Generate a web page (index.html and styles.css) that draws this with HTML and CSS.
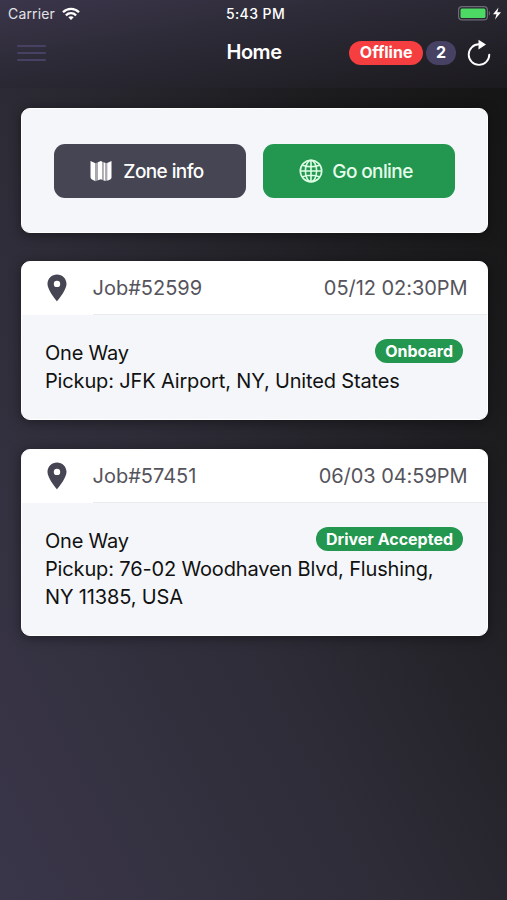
FILE: index.html
```
<!DOCTYPE html>
<html lang="en">
<head>
    <meta charset="UTF-8">
    <title>Home</title>
    <meta name="viewport" content="width=device-width, initial-scale=1">
    <link rel="stylesheet" href="styles.css">
</head>
<body>
    <header>
        <div class="status-bar">
            <div class="carrier">
                <span>Carrier</span>
                <svg width="18" height="14" viewBox="0 0 18 14" fill="none" stroke="#fff" stroke-width="2.3">
                    <path d="M1 5.2C5.5.7 12.5.7 17 5.2"/>
                    <path d="M3.9 8.3c2.9-2.8 7.3-2.8 10.2 0"/>
                    <path d="M9 13L6.3 10.3c1.5-1.4 3.9-1.4 5.4 0z" fill="#fff" stroke="none"/>
                </svg>
            </div>
            <span class="time">5:43 PM</span>
            <div class="battery">
                <svg width="44" height="15" viewBox="0 0 44 15">
                    <rect x=".6" y=".6" width="28.8" height="13.3" rx="3.5" fill="none" stroke="#6c6b74" stroke-width="1.2"/>
                    <rect x="2.5" y="2.5" width="25" height="9.5" rx="1.5" fill="#4cd964"/>
                    <path d="M30.8 5c1.6.6 1.6 4 0 4.6z" fill="#6c6b74"/>
                    <path d="M40.5 1.5L35 8.2h3.5l-1.5 5.3 6-7.2h-3.7z" fill="#fff"/>
                </svg>
            </div>
        </div>
        <div class="nav-bar">
            <button class="menu-btn" aria-label="Menu">
                <span></span>
                <span></span>
                <span></span>
            </button>
            <h1>Home</h1>
            <div class="nav-right">
                <span class="badge offline">Offline</span>
                <span class="badge count">2</span>
                <button class="refresh-btn" aria-label="Refresh">
                    <svg width="24" height="28" viewBox="0 0 24 28">
                        <path d="M12 5.3A10.3 10.3 0 1 0 22.3 15.6" fill="none" stroke="#fff" stroke-width="1.9" stroke-linecap="round"/>
                        <path d="M11.5.8L19 5.6l-7.5 4.9z" fill="#fff"/>
                    </svg>
                </button>
            </div>
        </div>
    </header>
    <main>
        <section class="card actions">
            <button class="btn btn-dark">
                <svg width="22" height="22" viewBox="0 0 22 22">
                    <path d="M.5 1l5 2.2v18L2 19.5Q.5 18.8.5 17z" fill="#fff"/>
                    <path d="M5.5 3.2L8 2.2v18l-2.5 1z" fill="#aaa9b1"/>
                    <path d="M8 2.2L10.8 1l1.2.5v18.3l-1.2-.5-2.8 1z" fill="#fff"/>
                    <path d="M12 1.5l1.6.7v18.3l-1.6-.7z" fill="#aaa9b1"/>
                    <path d="M13.6 2.2l2 .9v18l-2-.6z" fill="#fff"/>
                    <path d="M15.6 3.1h1.6v17.5l-1.6.5z" fill="#aaa9b1"/>
                    <path d="M17.2 2.9L21.5 1v16.5q0 1.3-1.3 1.9l-3 1.3z" fill="#fff"/>
                </svg>
                <span>Zone info</span>
            </button>
            <button class="btn btn-green">
                <svg width="24" height="24" viewBox="0 0 24 24" fill="none" stroke="#dcffe6" stroke-width="1.6">
                    <circle cx="12" cy="12" r="10.7"/>
                    <ellipse cx="12" cy="12" rx="5.6" ry="10.7"/>
                    <path d="M12 1.3v21.4M1.3 12h21.4M3.5 6.2q8.5 3 17 0M3.5 17.8q8.5-3 17 0"/>
                </svg>
                <span>Go online</span>
            </button>
        </section>

        <section class="card job">
            <div class="job-header">
                <svg class="pin" width="20" height="28" viewBox="0 0 20 28">
                    <path d="M10 .5C4.7.5.5 4.6.5 9.8.5 16.5 10 27.3 10 27.3s9.5-10.8 9.5-17.5C19.5 4.6 15.3.5 10 .5zm0 6.2a3.2 3.2 0 1 1 0 6.4 3.2 3.2 0 0 1 0-6.4z" fill="#464553" fill-rule="evenodd"/>
                </svg>
                <div class="job-title">
                    <span class="job-id">Job#52599</span>
                    <span class="job-date">05/12 02:30PM</span>
                </div>
            </div>
            <div class="job-body">
                <div class="job-row">
                    <span class="job-type">One Way</span>
                    <span class="badge status">Onboard</span>
                </div>
                <p class="pickup">Pickup: JFK Airport, NY, United States</p>
            </div>
        </section>

        <section class="card job">
            <div class="job-header">
                <svg class="pin" width="20" height="28" viewBox="0 0 20 28">
                    <path d="M10 .5C4.7.5.5 4.6.5 9.8.5 16.5 10 27.3 10 27.3s9.5-10.8 9.5-17.5C19.5 4.6 15.3.5 10 .5zm0 6.2a3.2 3.2 0 1 1 0 6.4 3.2 3.2 0 0 1 0-6.4z" fill="#464553" fill-rule="evenodd"/>
                </svg>
                <div class="job-title">
                    <span class="job-id">Job#57451</span>
                    <span class="job-date">06/03 04:59PM</span>
                </div>
            </div>
            <div class="job-body">
                <div class="job-row">
                    <span class="job-type">One Way</span>
                    <span class="badge status">Driver Accepted</span>
                </div>
                <p class="pickup">Pickup: 76-02 Woodhaven Blvd, Flushing,<br>NY 11385, USA</p>
            </div>
        </section>
    </main>
</body>
</html>
```

FILE: styles.css
```
:root {
    --dark: #464553;
    --green: #23964f;
    --red: #f43e40;
    --purple: #474263;
    --panel: #f4f6fa;
}
* {
    box-sizing: border-box;
}
body {
    margin: 0;
    height: 900px;
    display: flex;
    flex-direction: column;
    overflow: hidden;
    background: #1b1a1e;
    font-family: Inter, 'Liberation Sans', Arial, sans-serif;
}
button {
    border: none;
    background: none;
    padding: 0;
    font-family: inherit;
    cursor: pointer;
}
svg {
    display: block;
    flex-shrink: 0;
}
header {
    height: 88px;
    flex-shrink: 0;
    background: linear-gradient(170deg, #3b364b 0%, #2a2833 48%, #1b1a1e 100%);
    color: #fff;
}
.status-bar {
    height: 27px;
    padding: 0 5px 0 8px;
    display: grid;
    grid-template-columns: 1fr auto 1fr;
    align-items: center;
    font-size: 14px;
}
.carrier {
    display: flex;
    align-items: center;
    gap: 7px;
    color: #e4e3e8;
    letter-spacing: 0.15px;
}
.time {
    margin-left: 1px;
    font-weight: 500;
    font-size: 14px;
    letter-spacing: 0.4px;
}
.battery {
    display: flex;
    justify-content: flex-end;
}
.nav-bar {
    height: 51px;
    padding: 0 16px;
    display: grid;
    grid-template-columns: 1fr auto 1fr;
    align-items: center;
}
.menu-btn {
    width: 29px;
    margin-left: 1px;
    display: flex;
    flex-direction: column;
    gap: 5px;
}
.menu-btn span {
    height: 2px;
    border-radius: 1px;
    background: var(--purple);
}
h1 {
    margin: 0 0 1px 1px;
    font-size: 20px;
    font-weight: 600;
    letter-spacing: -0.5px;
}
.nav-right {
    display: flex;
    justify-content: flex-end;
    align-items: center;
}
.badge {
    height: 24px;
    padding: 0 10px;
    border-radius: 12px;
    display: flex;
    align-items: center;
    color: #fff;
    font-size: 16px;
    font-weight: 700;
    white-space: nowrap;
}
.offline {
    padding: 0 10.5px 1px;
    background: var(--red);
}
.count {
    margin-left: 3px;
    padding-bottom: 1px;
    background: var(--purple);
}
.refresh-btn {
    margin-left: 11px;
}
main {
    flex: 1;
    padding: 20px 19.5px 0 20.5px;
    background: linear-gradient(62deg, #3a364a 0%, #2e2c37 42%, #1b1b1d 82%, #151515 100%);
}
.card {
    margin-bottom: 29px;
    border: 1px solid #fff;
    border-radius: 9px;
    overflow: hidden;
    background: var(--panel);
    box-shadow: 0 2px 12px rgba(0, 0, 0, 0.4);
}
.actions {
    height: 125px;
    margin-bottom: 28px;
    padding: 0 32px;
    display: flex;
    align-items: center;
    gap: 17px;
}
.btn {
    flex: 1;
    height: 54px;
    padding: 1px 5px 0 0;
    border-radius: 11px;
    display: flex;
    align-items: center;
    justify-content: center;
    gap: 11px;
    color: #fff;
    font-size: 19px;
    font-weight: 500;
    letter-spacing: -0.6px;
}
.btn-dark {
    background: var(--dark);
}
.btn-green {
    background: var(--green);
    color: #e6ffec;
    gap: 9px;
}
.job-header {
    height: 53px;
    padding-left: 25px;
    display: flex;
    align-items: center;
    gap: 26px;
    background: #fff;
}
.pin {
    margin-bottom: 2px;
}
.job-title {
    flex: 1;
    height: 100%;
    padding-right: 19px;
    display: flex;
    align-items: center;
    justify-content: space-between;
    border-bottom: 1px solid #e9eaed;
    color: #55545d;
    font-size: 20px;
}
.job-date {
    letter-spacing: -0.05px;
}
.job-body {
    padding: 24px 23.5px 24px;
    color: #111;
    font-size: 20px;
    line-height: 28px;
}
.job-row {
    display: flex;
    justify-content: space-between;
    align-items: flex-start;
}
.job-type {
    letter-spacing: -0.2px;
}
.status {
    background: var(--green);
}
.pickup {
    margin: 0;
    letter-spacing: -0.15px;
    white-space: nowrap;
}
```
